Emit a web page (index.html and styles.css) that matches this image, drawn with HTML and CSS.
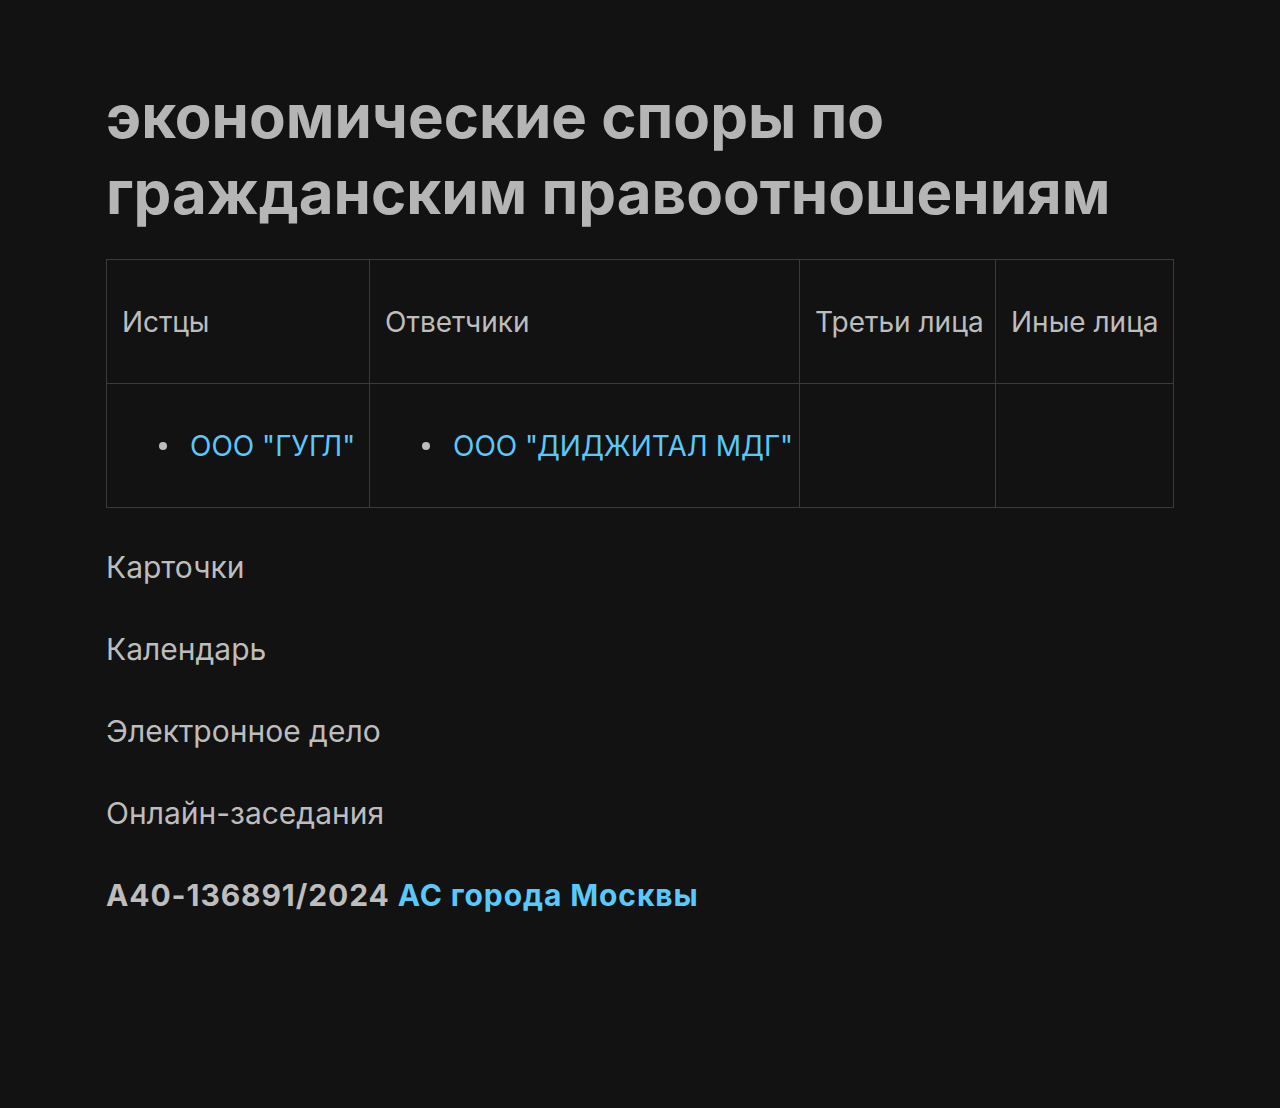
FILE: index.html
```
<!DOCTYPE html>
<html lang="ru">
<head>
    <meta charset="UTF-8">
    <meta name="viewport" content="width=device-width, initial-scale=1.0">
    <title>А40-136891/2024</title>
    <link rel="stylesheet" href="styles.css">
</head>
<body>
    <div class="page">
        <h1 class="case-title">экономические споры по гражданским правоотношениям</h1>

        <table class="parties">
            <thead>
                <tr>
                    <th class="col-plaintiffs">Истцы</th>
                    <th class="col-defendants">Ответчики</th>
                    <th class="col-third">Третьи лица</th>
                    <th class="col-other">Иные лица</th>
                </tr>
            </thead>
            <tbody>
                <tr>
                    <td>
                        <ul class="party-list">
                            <li><a href="#">ООО "ГУГЛ"</a></li>
                        </ul>
                    </td>
                    <td>
                        <ul class="party-list">
                            <li><a href="#">ООО "ДИДЖИТАЛ МДГ"</a></li>
                        </ul>
                    </td>
                    <td></td>
                    <td></td>
                </tr>
            </tbody>
        </table>

        <div class="sections">
            <p class="section">Карточки</p>
            <p class="section">Календарь</p>
            <p class="section">Электронное дело</p>
            <p class="section">Онлайн-заседания</p>
        </div>

        <p class="case-number">А40-136891/2024 <a href="#">АС города Москвы</a></p>
    </div>
</body>
</html>
```

FILE: styles.css
```
* {
    margin: 0;
    padding: 0;
    box-sizing: border-box;
}

body {
    font-family: Inter, "Noto Sans", sans-serif;
    background: #121212;
    color: #bdbdbd;
    min-height: 100vh;
}

a {
    color: #5ac8fa;
    text-decoration: none;
}

.page {
    padding: 78px 106px 40px;
}

.case-title {
    font-size: 60px;
    font-weight: 700;
    line-height: 76px;
    color: #b5b5b5;
    margin-bottom: 29px;
}

.parties {
    width: 1067px;
    border-collapse: collapse;
    table-layout: fixed;
    font-size: 28px;
}

.parties th,
.parties td {
    border: 1px solid #3a3a3a;
    text-align: left;
    font-weight: 400;
    padding: 0 15px;
    height: 124px;
    vertical-align: middle;
    white-space: nowrap;
}

.col-plaintiffs { width: 263px; }
.col-defendants { width: 430px; }
.col-third { width: 196px; }
.col-other { width: 178px; }

.party-list {
    list-style: none;
    padding-left: 37px;
}

.party-list li {
    display: flex;
    align-items: center;
}

.party-list li::before {
    content: "";
    width: 8px;
    height: 8px;
    border-radius: 50%;
    background: #bdbdbd;
    margin-right: 23px;
    flex-shrink: 0;
}

.sections {
    margin-top: 38px;
}

.section,
.case-number {
    font-size: 30px;
    line-height: 42px;
    margin-bottom: 40px;
}

.case-number {
    font-weight: 700;
    letter-spacing: 0.9px;
}
```
